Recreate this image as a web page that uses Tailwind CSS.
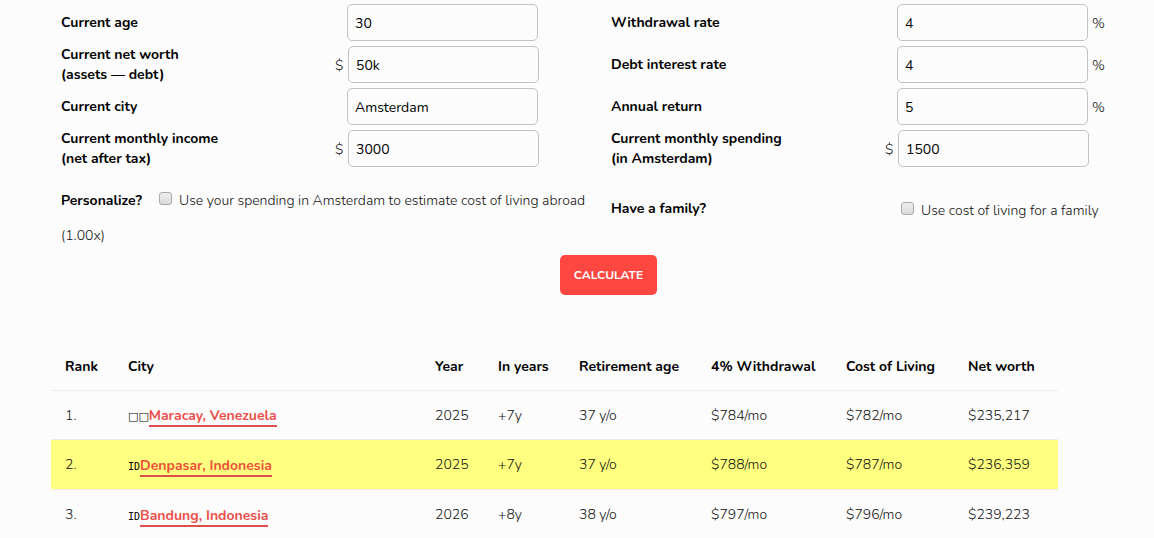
<!doctype html>
<html lang="en">
<head>
  <meta charset="UTF-8">
  <meta name="viewport" content="width=device-width, initial-scale=1.0">
  <title>Retirement calculator</title>
  <script src="https://cdn.jsdelivr.net/npm/@tailwindcss/browser@4"></script>
</head>
<body class="bg-[#fcfcfc] font-['Nunito','Open_Sans',sans-serif] text-[14px] leading-5 font-light text-[#111] overflow-hidden">

  <form class="pl-[61px] pt-[2px]" onsubmit="return false">
    <div class="grid grid-cols-2 gap-x-[7px]">
      <div class="flex h-[42px] items-center">
        <label for="age" class="w-[274px] font-bold text-black">Current age</label>
        <span class="w-[12px]"></span>
        <input id="age" type="text" value="30" class="mb-px h-[37px] w-[191px] rounded-[5px] border border-[#c2c2c2] px-[7px] pt-[2px] font-normal text-black">
      </div>
      <div class="flex h-[42px] items-center">
        <label for="withdrawal" class="w-[274px] font-bold text-black">Withdrawal rate</label>
        <span class="w-[12px]"></span>
        <input id="withdrawal" type="text" value="4" class="mb-px h-[37px] w-[191px] rounded-[5px] border border-[#c2c2c2] px-[7px] pt-[2px] font-normal text-black">
        <span class="ml-1 pt-[2px]">%</span>
      </div>

      <div class="flex h-[42px] items-center">
        <label for="networth" class="w-[274px] font-bold text-black">Current net worth<br>(assets — debt)</label>
        <span class="w-[13px] pt-[2px]">$</span>
        <input id="networth" type="text" value="50k" class="mb-px h-[37px] w-[191px] rounded-[5px] border border-[#c2c2c2] px-[7px] pt-[2px] font-normal text-black">
      </div>
      <div class="flex h-[42px] items-center">
        <label for="debt" class="w-[274px] font-bold text-black">Debt interest rate</label>
        <span class="w-[12px]"></span>
        <input id="debt" type="text" value="4" class="mb-px h-[37px] w-[191px] rounded-[5px] border border-[#c2c2c2] px-[7px] pt-[2px] font-normal text-black">
        <span class="ml-1 pt-[2px]">%</span>
      </div>

      <div class="flex h-[42px] items-center">
        <label for="city" class="w-[274px] font-bold text-black">Current city</label>
        <span class="w-[12px]"></span>
        <input id="city" type="text" value="Amsterdam" class="mb-px h-[37px] w-[191px] rounded-[5px] border border-[#c2c2c2] px-[7px] pt-[2px] font-normal text-black">
      </div>
      <div class="flex h-[42px] items-center">
        <label for="return" class="w-[274px] font-bold text-black">Annual return</label>
        <span class="w-[12px]"></span>
        <input id="return" type="text" value="5" class="mb-px h-[37px] w-[191px] rounded-[5px] border border-[#c2c2c2] px-[7px] pt-[2px] font-normal text-black">
        <span class="ml-1 pt-[2px]">%</span>
      </div>

      <div class="flex h-[42px] items-center">
        <label for="income" class="w-[274px] font-bold text-black">Current monthly income<br>(net after tax)</label>
        <span class="w-[13px] pt-[2px]">$</span>
        <input id="income" type="text" value="3000" class="mb-px h-[37px] w-[191px] rounded-[5px] border border-[#c2c2c2] px-[7px] pt-[2px] font-normal text-black">
      </div>
      <div class="flex h-[42px] items-center">
        <label for="spending" class="w-[274px] font-bold text-black">Current monthly spending<br>(in Amsterdam)</label>
        <span class="w-[13px] pt-[2px]">$</span>
        <input id="spending" type="text" value="1500" class="mb-px h-[37px] w-[191px] rounded-[5px] border border-[#c2c2c2] px-[7px] pt-[2px] font-normal text-black">
      </div>

      <div class="pt-[13px] leading-[35px]">
        <div class="flex whitespace-nowrap">
          <span class="w-[98px] font-bold text-black">Personalize?</span>
          <input id="personalize" type="checkbox" class="mt-[9px] mr-[7px] size-[13px] shrink-0 appearance-none rounded-[3px] border border-[#a9a9a9] bg-linear-to-b from-[#eee] to-[#dadada]">
          <label for="personalize">Use your spending in Amsterdam to estimate cost of living abroad</label>
        </div>
        <div>(1.00x)</div>
      </div>
      <div class="flex items-start pt-[21px] leading-[35px]">
        <span class="w-[290px] font-bold text-black">Have a family?</span>
        <input id="family" type="checkbox" class="mt-[11px] mr-[7px] size-[13px] shrink-0 appearance-none rounded-[3px] border border-[#a9a9a9] bg-linear-to-b from-[#eee] to-[#dadada]">
        <label for="family" class="pt-[2px]">Use cost of living for a family</label>
      </div>
    </div>

    <div class="flex justify-center pt-[2px] pl-[2px]">
      <button type="submit" class="h-[40px] w-[97px] rounded-[5px] bg-[#ff4742] text-[12px] font-bold text-white">CALCULATE</button>
    </div>
  </form>

  <div class="mt-[46px] mr-[96px] ml-[51px]">
    <table class="w-full table-fixed border-collapse">
      <colgroup>
        <col class="w-[63px]">
        <col>
        <col class="w-[63px]">
        <col class="w-[81px]">
        <col class="w-[132px]">
        <col class="w-[135px]">
        <col class="w-[122px]">
        <col class="w-[104px]">
      </colgroup>
      <thead>
        <tr class="h-[49px] border-b border-[#ececec] text-left whitespace-nowrap text-black">
          <th class="pt-[3px] pl-[14px]">Rank</th>
          <th class="pt-[3px] pl-[14px]">City</th>
          <th class="pt-[3px] pl-[14px]">Year</th>
          <th class="pt-[3px] pl-[14px]">In years</th>
          <th class="pt-[3px] pl-[14px]">Retirement age</th>
          <th class="pt-[3px] pl-[14px]">4% Withdrawal</th>
          <th class="pt-[3px] pl-[14px]">Cost of Living</th>
          <th class="pt-[3px] pl-[14px]">Net worth</th>
        </tr>
      </thead>
      <tbody>
        <tr class="h-[49px] border-b border-[#ececec]">
          <td class="pt-[2px] pl-[14px]">1.</td>
          <td class="pt-[3px] pl-[14px]"><span class="font-['DejaVu_Sans'] text-[11px] font-normal text-black">□□</span><a href="#" class="border-b-2 border-[#dc4f4a] font-bold text-[#ec4f4a]">Maracay, Venezuela</a></td>
          <td class="pt-[2px] pl-[14px]">2025</td>
          <td class="pt-[2px] pl-[14px]">+7y</td>
          <td class="pt-[2px] pl-[14px]">37 y/o</td>
          <td class="pt-[2px] pl-[14px]">$784/mo</td>
          <td class="pt-[2px] pl-[14px]">$782/mo</td>
          <td class="pt-[2px] pl-[14px]">$235,217</td>
        </tr>
        <tr class="h-[50px] border-b border-[#ececec] bg-[#ffff80]">
          <td class="pt-[2px] pl-[14px]">2.</td>
          <td class="pt-[4px] pl-[14px]"><span class="font-['DejaVu_Sans_Mono'] text-[10px] font-normal text-black">ID</span><a href="#" class="border-b-2 border-[#dc4f4a] font-bold text-[#ec4f3a]">Denpasar, Indonesia</a></td>
          <td class="pt-[2px] pl-[14px]">2025</td>
          <td class="pt-[2px] pl-[14px]">+7y</td>
          <td class="pt-[2px] pl-[14px]">37 y/o</td>
          <td class="pt-[2px] pl-[14px]">$788/mo</td>
          <td class="pt-[2px] pl-[14px]">$787/mo</td>
          <td class="pt-[2px] pl-[14px]">$236,359</td>
        </tr>
        <tr class="h-[50px]">
          <td class="pt-[2px] pl-[14px]">3.</td>
          <td class="pt-[4px] pl-[14px]"><span class="font-['DejaVu_Sans_Mono'] text-[10px] font-normal text-black">ID</span><a href="#" class="border-b-2 border-[#dc4f4a] font-bold text-[#ec4f4a]">Bandung, Indonesia</a></td>
          <td class="pt-[2px] pl-[14px]">2026</td>
          <td class="pt-[2px] pl-[14px]">+8y</td>
          <td class="pt-[2px] pl-[14px]">38 y/o</td>
          <td class="pt-[2px] pl-[14px]">$797/mo</td>
          <td class="pt-[2px] pl-[14px]">$796/mo</td>
          <td class="pt-[2px] pl-[14px]">$239,223</td>
        </tr>
      </tbody>
    </table>
  </div>

</body>
</html>
